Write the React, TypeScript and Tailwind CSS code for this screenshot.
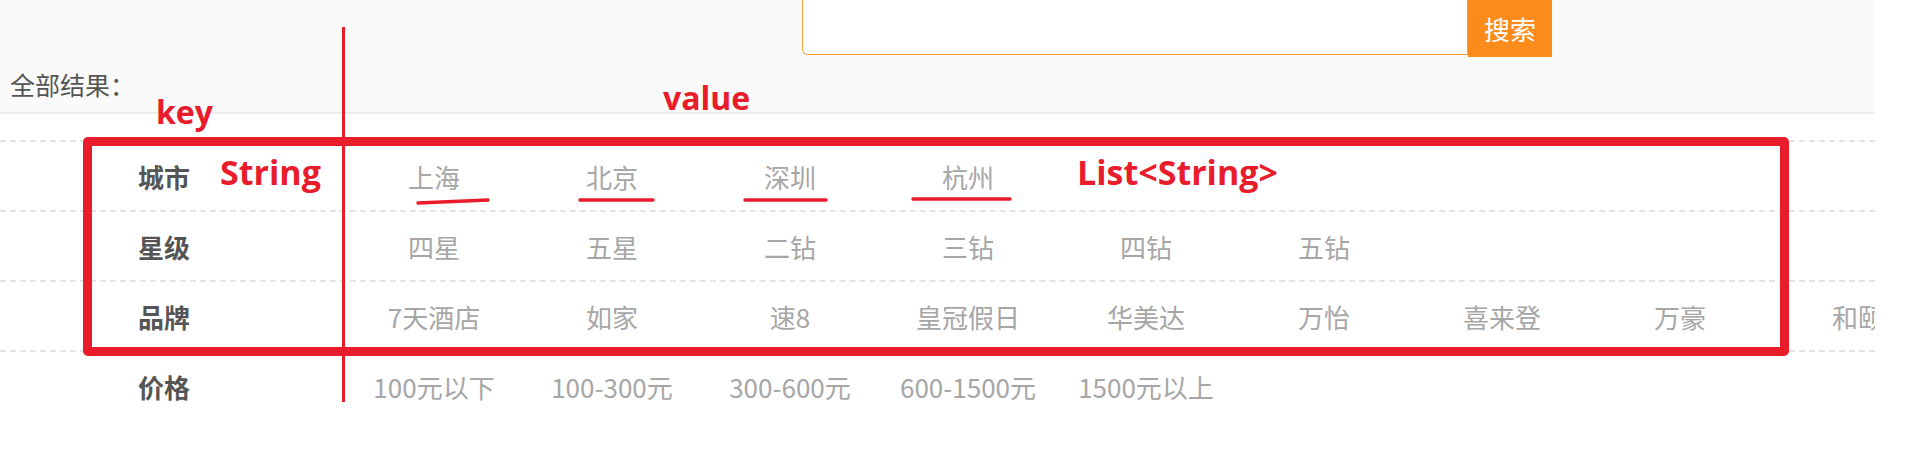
import React from 'react';

const cjk = { fontFamily: '"Noto Sans CJK SC", "Noto Sans", sans-serif' };
const note = { fontFamily: '"Open Sans", "Noto Sans", sans-serif' };

const rows: { label: string; values: string[] }[] = [
  { label: '城市', values: ['上海', '北京', '深圳', '杭州'] },
  { label: '星级', values: ['四星', '五星', '二钻', '三钻', '四钻', '五钻'] },
  {
    label: '品牌',
    values: ['7天酒店', '如家', '速8', '皇冠假日', '华美达', '万怡', '喜来登', '万豪', '和颐'],
  },
  { label: '价格', values: ['100元以下', '100-300元', '300-600元', '600-1500元', '1500元以上'] },
];

function FilterRow({ label, values }: { label: string; values: string[] }) {
  return (
    <div className="flex items-center h-[70px] border-t-2 border-dashed border-[#e3e3e3]">
      <div className="w-[345px] shrink-0 pl-[138px] text-[26px] font-bold text-[#555]">{label}</div>
      {values.map((v) => (
        <div key={v} className="w-[178px] shrink-0 text-center text-[26px] text-[#a6a6a6] whitespace-nowrap">
          {v}
        </div>
      ))}
    </div>
  );
}

export default function App() {
  return (
    <div className="relative w-[1928px] h-[452px] bg-white overflow-hidden" style={cjk}>
      <div className="w-[1875px] overflow-hidden">
        {/* header with search */}
        <div className="h-[114px] bg-[#fafafa] border-b-2 border-[#ebebeb]">
          <div className="flex pl-[802px]">
            <div className="w-[666px] h-[55px] bg-white border border-t-0 border-[#f6a03c] rounded-bl-[6px]" />
            <button className="w-[84px] h-[57px] bg-[#fb8c1b] text-white text-[26px] leading-none">搜索</button>
          </div>
          <div className="pl-[10px] mt-[12px] text-[25px] leading-[30px] text-[#555]">全部结果：</div>
        </div>

        <div className="pt-[26px]">
          {rows.map((r) => (
            <FilterRow key={r.label} label={r.label} values={r.values} />
          ))}
        </div>
      </div>

      {/* annotations drawn over the page */}
      <div className="absolute left-[83px] top-[137px] w-[1706px] h-[219px] border-[9px] border-[#e81c2a] rounded-[5px]" />
      <div className="absolute left-[342px] top-[27px] w-[3px] h-[375px] bg-[#e81c2a]" />
      <div className="absolute left-[156px] top-[96px] text-[32px] leading-none font-bold text-[#e81c2a]" style={note}>
        key
      </div>
      <div className="absolute left-[663px] top-[82px] text-[32px] leading-none font-bold text-[#e81c2a]" style={note}>
        value
      </div>
      <div className="absolute left-[220px] top-[155px] text-[34px] leading-none font-bold text-[#e81c2a]" style={note}>
        String
      </div>
      <div className="absolute left-[1077px] top-[155px] text-[34px] leading-none font-bold text-[#e81c2a]" style={note}>
        List&lt;String&gt;
      </div>
      <svg className="absolute left-0 top-0" width="1928" height="452">
        <g stroke="#e81c2a" strokeWidth="3.5" strokeLinecap="round" fill="none">
          <line x1="418" y1="203" x2="488" y2="200" />
          <line x1="580" y1="200" x2="653" y2="200" />
          <line x1="745" y1="200" x2="826" y2="200" />
          <line x1="913" y1="199" x2="1010" y2="199" />
        </g>
      </svg>
    </div>
  );
}
